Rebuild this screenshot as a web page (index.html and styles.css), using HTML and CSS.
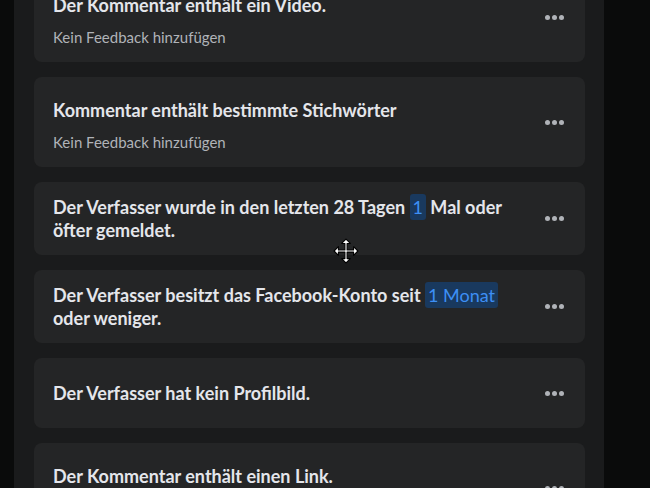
FILE: index.html
```html
<!DOCTYPE html>
<html lang="de">
<head>
    <meta charset="UTF-8">
    <meta name="viewport" content="width=device-width, initial-scale=1.0">
    <title>Kommentarfilter</title>
    <link rel="stylesheet" href="styles.css">
</head>
<body>
    <div class="panel">
        <ul class="rule-list">
            <li class="rule rule-with-note">
                <div class="rule-text">
                    <p class="rule-title">Der Kommentar enthält ein Video.</p>
                    <p class="rule-note">Kein Feedback hinzufügen</p>
                </div>
                <button class="more" type="button" aria-label="Optionen"><span></span><span></span><span></span></button>
            </li>
            <li class="rule rule-with-note">
                <div class="rule-text">
                    <p class="rule-title">Kommentar enthält bestimmte Stichwörter</p>
                    <p class="rule-note">Kein Feedback hinzufügen</p>
                </div>
                <button class="more" type="button" aria-label="Optionen"><span></span><span></span><span></span></button>
            </li>
            <li class="rule">
                <div class="rule-text">
                    <p class="rule-title">Der Verfasser wurde in den letzten 28 Tagen <span class="value">1</span> Mal oder öfter gemeldet.</p>
                </div>
                <button class="more" type="button" aria-label="Optionen"><span></span><span></span><span></span></button>
            </li>
            <li class="rule">
                <div class="rule-text">
                    <p class="rule-title">Der Verfasser besitzt das Facebook-Konto seit <span class="value">1 Monat</span> oder weniger.</p>
                </div>
                <button class="more" type="button" aria-label="Optionen"><span></span><span></span><span></span></button>
            </li>
            <li class="rule rule-single">
                <div class="rule-text">
                    <p class="rule-title">Der Verfasser hat kein Profilbild.</p>
                </div>
                <button class="more" type="button" aria-label="Optionen"><span></span><span></span><span></span></button>
            </li>
            <li class="rule rule-with-note">
                <div class="rule-text">
                    <p class="rule-title">Der Kommentar enthält einen Link.</p>
                    <p class="rule-note">Kein Feedback hinzufügen</p>
                </div>
                <button class="more" type="button" aria-label="Optionen"><span></span><span></span><span></span></button>
            </li>
        </ul>
    </div>

    <!-- move cursor hovering over the list -->
    <svg class="cursor" width="26" height="26" viewBox="0 0 24 24">
        <path d="M12 1 L16 5 L13 5 L13 11 L19 11 L19 8 L23 12 L19 16 L19 13 L13 13 L13 19 L16 19 L12 23 L8 19 L11 19 L11 13 L5 13 L5 16 L1 12 L5 8 L5 11 L11 11 L11 5 L8 5 Z" fill="#fff" stroke="#000" stroke-width="1" stroke-linejoin="round"/>
    </svg>
</body>
</html>
```

FILE: styles.css
```css
body {
    margin: 0;
    height: 488px;
    overflow: hidden;
    background-color: #0a0b0b;
    font-family: Lato, "Liberation Sans", sans-serif;
    color: #e4e6eb;
}
.panel {
    width: 590px;
    height: 488px;
    margin-left: 14px;
    background-color: #1a1b1c;
    overflow: hidden;
}
.rule-list {
    list-style: none;
    margin: -28px 0 0 0;
    padding: 0 19px 0 20px;
    display: flex;
    flex-direction: column;
    gap: 15px;
}
.rule {
    display: flex;
    align-items: center;
    padding: 13.5px 12px 13.5px 19px;
    background-color: #242526;
    border-radius: 8px;
}
.rule-with-note {
    padding-top: 22px;
    padding-bottom: 15px;
}
/* the menu button sits a little above the middle when there is a note */
.rule-with-note .more {
    margin-bottom: 7px;
}
.rule-single {
    min-height: 70px;
    box-sizing: border-box;
}
.rule-text {
    flex: 1;
    padding-right: 20px;
}
.rule-title {
    margin: 0;
    font-size: 18px;
    font-weight: 700;
    line-height: 23px;
}
.rule-note {
    margin: 10px 0 0;
    font-size: 15px;
    line-height: 20px;
    color: #b0b3b8;
}
.value {
    padding: 2px 3px;
    border-radius: 3px;
    background-color: #19395e;
    color: #3d8ff5;
    font-weight: 400;
}
.more {
    display: flex;
    gap: 2px;
    padding: 6px 9px;
    background: none;
    border: none;
    cursor: pointer;
}
.more span {
    width: 5px;
    height: 5px;
    border-radius: 50%;
    background-color: #b0b3b8;
}
.cursor {
    position: absolute;
    left: 333px;
    top: 238px;
}
```
